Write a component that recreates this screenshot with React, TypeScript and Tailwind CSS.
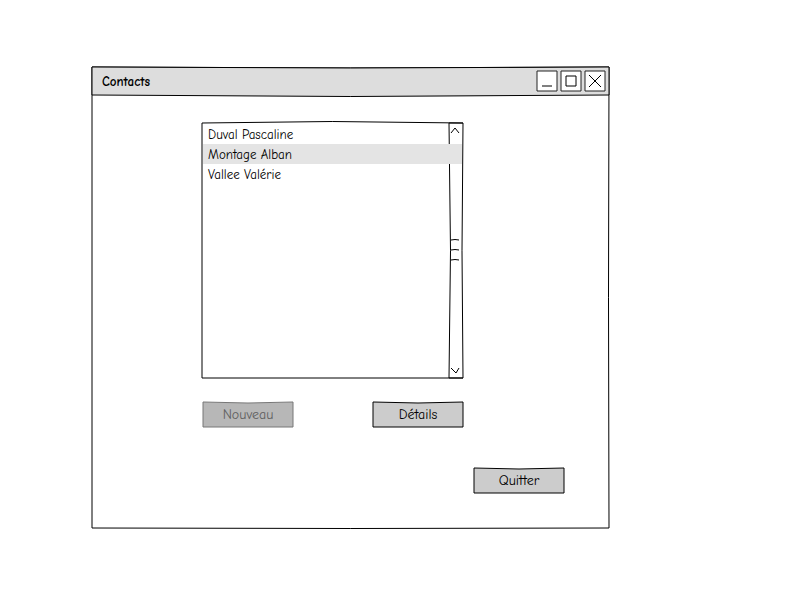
import { useState } from "react";

type OutlineProps = { w: number; h: number; d: string; fill?: string; stroke?: string };

function Sketch({ w, h, d, fill = "none", stroke = "#000" }: OutlineProps) {
  return (
    <svg
      className="pointer-events-none absolute inset-0 h-full w-full overflow-visible"
      viewBox={`0 0 ${w} ${h}`}
      preserveAspectRatio="none"
      fill={fill}
      stroke={stroke}
      aria-hidden="true"
    >
      <path d={d} vectorEffect="non-scaling-stroke" />
    </svg>
  );
}

function SketchButton({ label, disabled = false }: { label: string; disabled?: boolean }) {
  return (
    <button
      type="button"
      disabled={disabled}
      className={
        "relative h-[25px] w-[90px] text-[14px] leading-6 " +
        (disabled ? "text-[#606060]" : "text-black")
      }
    >
      <Sketch
        w={90}
        h={25}
        d="M0 0Q45 2 90 0L90 25L0 25Z"
        fill={disabled ? "#b7b7b7" : "#ccc"}
        stroke={disabled ? "#777" : "#000"}
      />
      <span className="relative">{label}</span>
    </button>
  );
}

function WindowControl({ label, d }: { label: string; d: string }) {
  return (
    <button type="button" aria-label={label} className="relative size-5">
      <Sketch w={20} h={20} d="M0 0H20V20H0Z" fill="#fff" stroke="#222" />
      <Sketch w={20} h={20} d={d} />
    </button>
  );
}

const contacts = ["Duval Pascaline", "Montage Alban", "Vallee Valérie"];

export default function App() {
  const [selected, setSelected] = useState(1);
  return (
    <main className="min-h-screen bg-white pt-[67px] pr-4 pl-[92px] font-['Comic_Sans_MS','Comic_Neue','Noto_Sans',sans-serif] text-[13px] text-black [font-variant-ligatures:none]">
      <section className="relative w-full max-w-[517px] pb-[35px]">
        <Sketch w={517} h={461} d="M0 0Q258 2 517 0Q516 230 517 461Q258 462 0 461Z" />
        <header className="relative flex h-7 items-center justify-between pr-1 pl-[10px]">
          <Sketch w={517} h={28} d="M0 0Q258 2 517 0V28Q258 31 0 28Z" fill="#ddd" />
          <h1 className="relative pt-0.5 text-[13px] leading-6 font-bold">Contacts</h1>
          <div className="relative flex gap-1">
            <WindowControl label="Réduire" d="M5 15H15" />
            <WindowControl label="Agrandir" d="M5 5H15V15H5Z" />
            <WindowControl label="Fermer" d="M4 4L16 16M16 4L4 16" />
          </div>
        </header>
        <div className="pt-7 pr-[45px] pl-[110px]">
          <div className="w-full max-w-[261px]">
            <div className="relative h-[255px] pt-px">
              <Sketch w={261} h={255} d="M0 0Q130 -3 261 0Q259 128 261 255H0Z" />
              <div className="absolute inset-y-0 right-0 w-[14px]">
                <Sketch
                  w={14}
                  h={255}
                  d="M0 0H14M0 0Q3 128 0 255H14M2 117Q6 116 10 117M2 127Q6 126 10 127M2 137Q6 136 10 137M2 10L6 5L10 10M2 245L7 250L10 245"
                />
              </div>
              <ul role="listbox" aria-label="Contacts" className="relative px-px">
                {contacts.map((name, i) => (
                  <li
                    key={name}
                    role="option"
                    aria-selected={i === selected}
                    onClick={() => setSelected(i)}
                    className={"h-5 pt-px pl-[5px] leading-5 " + (i === selected ? "bg-[#e4e4e4]" : "")}
                  >
                    {name}
                  </li>
                ))}
              </ul>
            </div>
            <div className="flex justify-between pt-6 pl-px">
              <SketchButton label="Nouveau" disabled />
              <SketchButton label="Détails" />
            </div>
          </div>
          <div className="flex justify-end pt-[41px]">
            <SketchButton label="Quitter" />
          </div>
        </div>
      </section>
    </main>
  );
}
